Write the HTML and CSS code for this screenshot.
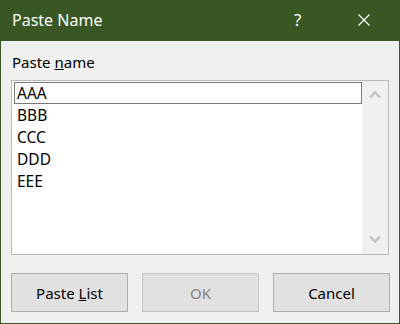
FILE: index.html
```html
<!DOCTYPE html>
<html>
    <head>
        <title>Paste Name</title>
        <link rel="stylesheet" href="styles.css">
    </head>
    <body>
        <div class="dialog">
            <div class="titlebar">
                <span class="title">Paste Name</span>
                <span class="help">?</span>
                <span class="close">
                    <svg width="12" height="12" viewBox="0 0 12 12">
                        <path d="M0.5 0.5 L11.5 11.5 M11.5 0.5 L0.5 11.5" stroke="#fff" stroke-width="1.1" fill="none"/>
                    </svg>
                </span>
            </div>

            <div class="content">
                <label class="caption">Paste <u>n</u>ame</label>

                <div class="listbox">
                    <ul class="items">
                        <li class="item focused">AAA</li>
                        <li class="item">BBB</li>
                        <li class="item">CCC</li>
                        <li class="item">DDD</li>
                        <li class="item">EEE</li>
                    </ul>
                    <div class="scrollbar">
                        <svg width="12" height="9" viewBox="0 0 12 9">
                            <path d="M1 7.5 L6 2.5 L11 7.5" stroke="#c2c2c2" stroke-width="2.4" fill="none"/>
                        </svg>
                        <svg width="12" height="9" viewBox="0 0 12 9">
                            <path d="M1 1.5 L6 6.5 L11 1.5" stroke="#c2c2c2" stroke-width="2.4" fill="none"/>
                        </svg>
                    </div>
                </div>

                <div class="buttons">
                    <button>Paste <u>L</u>ist</button>
                    <button class="disabled">OK</button>
                    <button>Cancel</button>
                </div>
            </div>
        </div>
    </body>
</html>
```

FILE: styles.css
```css
body {
    margin: 0;
    font-family: "Noto Sans", "Open Sans", sans-serif;
    color: #000;
}

.dialog {
    width: 400px;
    height: 324px;
    box-sizing: border-box;
    background: #f0f0f0;
    border: 1px solid #385723;
    border-top: none;
    display: flex;
    flex-direction: column;
}

.titlebar {
    height: 41px;
    background: #385723;
    color: #fff;
    display: flex;
    align-items: center;
    margin: 0 -1px;
}

.title {
    font-size: 16px;
    padding-left: 12px;
    flex: 1;
    padding-bottom: 2px;
}

.help {
    font-size: 17px;
    width: 20px;
    margin-right: 44px;
    padding-bottom: 2px;
}

.close {
    display: flex;
    margin-right: 30px;
    padding-bottom: 1px;
}

.content {
    padding: 11px 10px 11px 10px;
    flex: 1;
    display: flex;
    flex-direction: column;
}

.caption {
    font-size: 15px;
    line-height: 20px;
    margin-left: 1px;
    height: 28px;
}

.listbox {
    height: 175px;
    box-sizing: border-box;
    border: 1px solid #b9b9b9;
    background: #fff;
    display: flex;
}

.items {
    list-style: none;
    margin: 0;
    padding: 1px 0 0 2px;
    flex: 1;
}

.item {
    height: 22px;
    box-sizing: border-box;
    font-size: 15.5px;
    line-height: 20px;
    padding-left: 2px;
    border: 1px solid transparent;
}

.item.focused {
    border-color: #7a7a7a;
}

.scrollbar {
    width: 26px;
    background: #f0f0f0;
    display: flex;
    flex-direction: column;
    justify-content: space-between;
    align-items: center;
    padding: 9px 0 10px 0;
}

.buttons {
    margin-top: auto;
    display: grid;
    grid-template-columns: 117px 117px 117px;
    column-gap: 14px;
}

button {
    height: 39px;
    background: #e1e1e1;
    border: 1px solid #adadad;
    font-family: "Noto Sans", "Open Sans", sans-serif;
    font-size: 15px;
    color: #000;
    padding: 0;
}

button.disabled {
    color: #838383;
    border-color: #c4c4c4;
}
```
